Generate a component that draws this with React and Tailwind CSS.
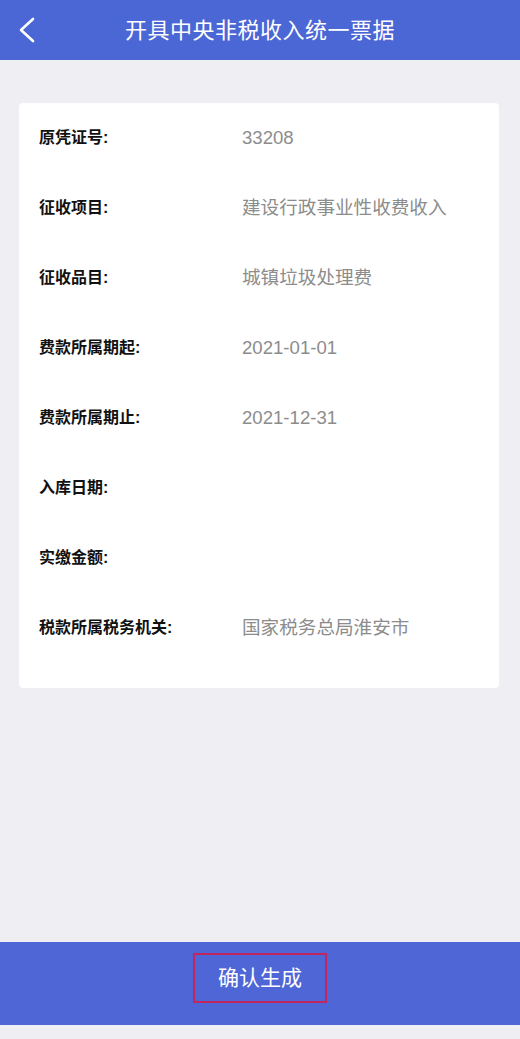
const rows = [
  { label: '原凭证号:', value: '33208' },
  { label: '征收项目:', value: '建设行政事业性收费收入' },
  { label: '征收品目:', value: '城镇垃圾处理费' },
  { label: '费款所属期起:', value: '2021-01-01' },
  { label: '费款所属期止:', value: '2021-12-31' },
  { label: '入库日期:', value: '' },
  { label: '实缴金额:', value: '' },
  { label: '税款所属税务机关:', value: '国家税务总局淮安市' },
];

export default function App() {
  return (
    <div
      className="h-[1039px] w-[520px] flex flex-col bg-[#eeeef3] overflow-hidden"
      style={{ fontFamily: '"Liberation Sans", "Noto Sans CJK SC", sans-serif' }}
    >
      {/* top bar */}
      <header className="h-[60px] bg-[#4b66d5] flex items-center relative">
        <button className="absolute left-[14px] top-[14px] text-white">
          <svg width="28" height="32" viewBox="0 0 28 32" fill="none">
            <polyline points="19,5 7,16 19,27" stroke="currentColor" strokeWidth="2.6" strokeLinecap="round" strokeLinejoin="round" />
          </svg>
        </button>
        <h1 className="w-full text-center text-white text-[22px] tracking-[0.5px]">开具中央非税收入统一票据</h1>
      </header>

      {/* detail card */}
      <main className="flex-1">
        <div className="mt-[43px] ml-[19px] w-[480px] bg-white rounded-sm pb-[25px]">
          {rows.map((row) => (
            <div key={row.label} className="h-[70px] flex items-center pl-[20px]">
              <span className="w-[203px] shrink-0 text-[16px] font-bold text-[#111]">{row.label}</span>
              <span className="text-[18.6px] text-[#8c8c8c]">{row.value}</span>
            </div>
          ))}
        </div>
      </main>

      {/* bottom action bar */}
      <footer className="h-[83px] bg-[#4e66d6] flex items-center justify-center">
        <div className="mt-[-12px] w-[134px] h-[50px] border-2 border-[#c2245c] flex items-center justify-center">
          <span className="text-white text-[21px]">确认生成</span>
        </div>
      </footer>
      <div className="h-[14px] bg-[#eeeef3]" />
    </div>
  );
}
